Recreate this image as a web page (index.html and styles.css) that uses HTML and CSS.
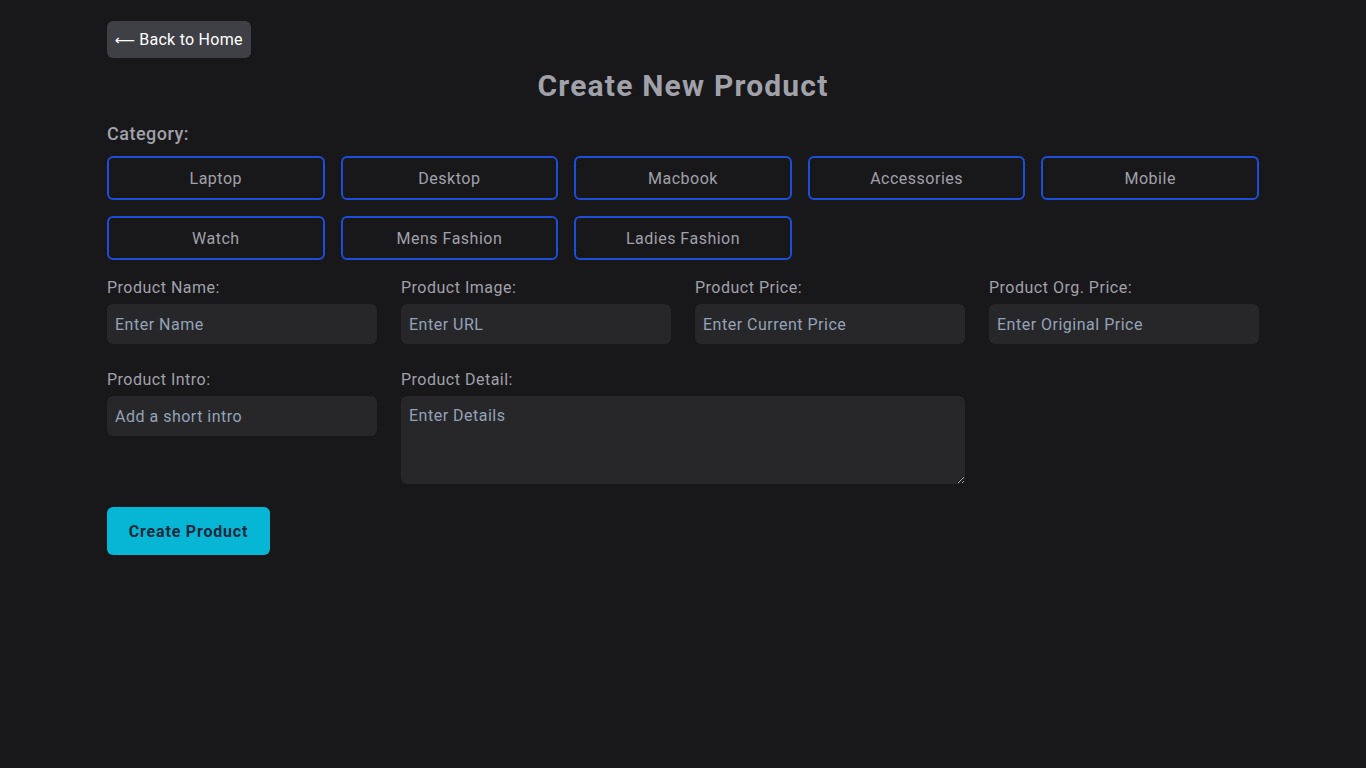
FILE: index.html
```html
<!DOCTYPE html>
<html lang="en">
<head>
<meta charset="utf-8">
<title>Create New Product</title>
<link rel="stylesheet" href="styles.css">
</head>
<body>
<div class="page">
  <div class="top">
    <button class="back"><span class="arrow">&#10229;</span> Back to Home</button>
  </div>
  <h1 class="title">Create New Product</h1>
  <div class="cat-label">Category:</div>
  <div class="cats">
    <button class="cat">Laptop</button>
    <button class="cat">Desktop</button>
    <button class="cat">Macbook</button>
    <button class="cat">Accessories</button>
    <button class="cat">Mobile</button>
    <button class="cat">Watch</button>
    <button class="cat">Mens Fashion</button>
    <button class="cat">Ladies Fashion</button>
  </div>
  <div class="fields">
    <div class="field">
      <label class="lbl">Product Name:</label>
      <input class="inp" placeholder="Enter Name">
    </div>
    <div class="field">
      <label class="lbl">Product Image:</label>
      <input class="inp" placeholder="Enter URL">
    </div>
    <div class="field">
      <label class="lbl">Product Price:</label>
      <input class="inp" placeholder="Enter Current Price">
    </div>
    <div class="field">
      <label class="lbl">Product Org. Price:</label>
      <input class="inp" placeholder="Enter Original Price">
    </div>
    <div class="field">
      <label class="lbl">Product Intro:</label>
      <input class="inp" placeholder="Add a short intro">
    </div>
    <div class="field wide">
      <label class="lbl">Product Detail:</label>
      <textarea class="inp area" placeholder="Enter Details"></textarea>
    </div>
  </div>
  <button class="create">Create Product</button>
</div>
</body>
</html>
```

FILE: styles.css
```css
* { box-sizing: border-box; }
html, body {
  margin: 0;
  padding: 0;
  background: #18181b;
  font-family: "Roboto", "Liberation Sans", sans-serif;
}
.page {
  width: 1152px;
  margin: 0 auto;
  padding-top: 21px;
}
.top { display: flex; }
.back {
  background: #3f3f46;
  color: #ffffff;
  border: none;
  border-radius: 6px;
  height: 37px;
  padding: 0 8px;
  font-family: inherit;
  font-size: 16px;
  letter-spacing: 0.25px;
  cursor: pointer;
}
.arrow {
  font-family: "DejaVu Sans", sans-serif;
  font-size: 14px;
  letter-spacing: 0;
}
.title {
  margin: 10px 0 0;
  text-align: center;
  font-size: 30px;
  line-height: 36px;
  font-weight: 700;
  letter-spacing: 1.2px;
  color: #a1a1aa;
}
.cat-label {
  margin-top: 16px;
  font-size: 18px;
  line-height: 28px;
  font-weight: 500;
  letter-spacing: 0.5px;
  color: #a1a1aa;
}
.cats {
  margin-top: 8px;
  display: grid;
  grid-template-columns: repeat(5, 1fr);
  gap: 16px;
}
.cat {
  height: 44px;
  background: transparent;
  border: 2px solid #1d4ed8;
  border-radius: 6px;
  color: #a1a1aa;
  font-family: inherit;
  font-size: 16px;
  letter-spacing: 0.5px;
  cursor: pointer;
}
.fields {
  margin-top: 16px;
  display: grid;
  grid-template-columns: repeat(4, 1fr);
  column-gap: 24px;
  row-gap: 24px;
  align-items: start;
}
.field { display: flex; flex-direction: column; }
.field.wide { grid-column: span 2; }
.lbl {
  font-size: 16px;
  line-height: 24px;
  letter-spacing: 0.5px;
  color: #a1a1aa;
  margin-bottom: 4px;
}
.inp {
  height: 40px;
  background: #27272a;
  border: none;
  border-radius: 6px;
  padding: 0 8px;
  font-family: inherit;
  font-size: 16px;
  letter-spacing: 0.5px;
  color: #d4d4d8;
  outline: none;
}
.inp::placeholder { color: #94a3b8; }
.area {
  height: 88px;
  padding: 9px 8px 8px;
  line-height: 22px;
  resize: vertical;
}
.create {
  margin-top: 23px;
  width: 163px;
  height: 48px;
  background: #06b6d4;
  border: none;
  border-radius: 6px;
  color: #1e293b;
  font-family: inherit;
  font-size: 16px;
  font-weight: 700;
  letter-spacing: 0.8px;
  cursor: pointer;
}
```
